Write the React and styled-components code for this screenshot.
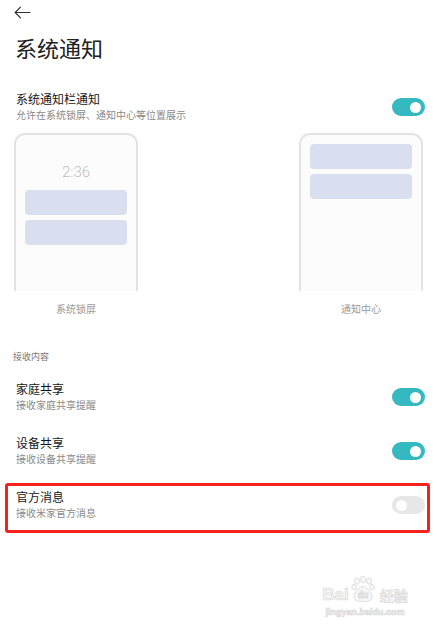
import React from 'react';
import styled, { createGlobalStyle } from 'styled-components';

const GlobalStyle = createGlobalStyle`
  html, body {
    margin: 0;
    padding: 0;
    background: #fff;
  }
  body {
    font-family: "Noto Sans CJK SC", "Noto Sans", sans-serif;
    color: #1a1a1a;
  }
`;

const Page = styled.div`
  position: relative;
  width: 437px;
  height: 632px;
  overflow: hidden;
  background: #fff;
`;

const TopBar = styled.div`
  height: 25px;
  display: flex;
  align-items: center;
  padding-left: 14px;
`;

const BackButton = styled.button`
  border: none;
  background: none;
  padding: 0;
  display: flex;
  align-items: center;
`;

const Title = styled.h1`
  margin: 7px 0 0 15px;
  font-size: 22px;
  line-height: 30px;
  font-weight: 400;
  color: #222;
`;

const Row = styled.div`
  position: relative;
  display: flex;
  align-items: center;
  justify-content: space-between;
  height: 54px;
  box-sizing: border-box;
  padding: 0 12px 0 16px;

  ${({ $marked }) => $marked && `
    &::after {
      content: '';
      position: absolute;
      top: 5px;
      bottom: -1px;
      left: 5px;
      right: 7px;
      border: 3px solid #f5211a;
      border-radius: 3px;
      pointer-events: none;
    }
  `}
`;

const RowText = styled.div`
  display: flex;
  flex-direction: column;
  margin-top: -1px;
`;

const RowTitle = styled.div`
  font-size: 12px;
  line-height: 16px;
  color: #161616;
`;

const RowSub = styled.div`
  font-size: 10px;
  line-height: 15px;
  color: #8a8a8a;
`;

const Track = styled.div`
  width: 33px;
  height: 18px;
  border-radius: 9px;
  background: ${({ $on }) => ($on ? '#34b9c0' : '#e7e7e7')};
  display: flex;
  align-items: center;
  justify-content: ${({ $on }) => ($on ? 'flex-end' : 'flex-start')};
  padding: 0 4px;
  box-sizing: border-box;
`;

const Knob = styled.div`
  width: 11px;
  height: 11px;
  border-radius: 50%;
  background: #fff;
`;

const Previews = styled.div`
  display: flex;
  justify-content: space-between;
  padding: 0 14px;
  margin-top: -1px;
`;

const PreviewCol = styled.div`
  display: flex;
  flex-direction: column;
  align-items: center;
`;

const Phone = styled.div`
  width: 124px;
  height: 158px;
  box-sizing: border-box;
  border: 2px solid #e3e3e3;
  border-bottom: none;
  border-radius: 11px 11px 0 0;
  background: #fcfcfc;
  padding: 9px 9px 0;
  display: flex;
  flex-direction: column;
  gap: 5px;
`;

const Clock = styled.div`
  font-family: Roboto, "Noto Sans", sans-serif;
  font-weight: 300;
  font-size: 15px;
  line-height: 20px;
  color: #bdbdbd;
  text-align: center;
  margin: 18px 0 3px;
`;

const Card = styled.div`
  height: 25px;
  border-radius: 4px;
  background: #dadff0;
`;

const PreviewLabel = styled.div`
  margin-top: 11px;
  font-size: 10px;
  line-height: 14px;
  color: #9a9a9a;
`;

const SectionLabel = styled.div`
  margin: 35px 0 7px 13px;
  font-size: 9px;
  line-height: 12px;
  color: #777;
`;

const Watermark = styled.div`
  position: absolute;
  left: 318px;
  top: 576px;
  width: 94px;
  display: flex;
  flex-direction: column;
  align-items: center;
  color: #f6f6f6;
  -webkit-text-stroke: 0.7px #d9d9d9;
  font-family: "Liberation Sans", Arial, sans-serif;
  pointer-events: none;
`;

const MarkLine = styled.div`
  display: flex;
  align-items: flex-end;
  gap: 2px;
`;

const MarkBig = styled.span`
  font-size: 17px;
  font-weight: 700;
  line-height: 16px;
`;

const MarkCn = styled.span`
  font-family: "Noto Sans CJK SC", sans-serif;
  font-size: 14px;
  font-weight: 700;
  line-height: 16px;
  margin-left: 3px;
`;

const MarkUrl = styled.div`
  margin-top: 4px;
  font-size: 9px;
  font-weight: 700;
  line-height: 10px;
`;

const Switch = ({ on }) => (
  <Track $on={on}>
    <Knob />
  </Track>
);

const SettingRow = ({ title, sub, on, marked }) => (
  <Row $marked={marked}>
    <RowText>
      <RowTitle>{title}</RowTitle>
      <RowSub>{sub}</RowSub>
    </RowText>
    <Switch on={on} />
  </Row>
);

const Paw = () => (
  <svg width="24" height="27" viewBox="0 0 24 27" fill="#f6f6f6" stroke="#d9d9d9" strokeWidth="0.8">
    <ellipse cx="6" cy="5" rx="2.6" ry="3.2" />
    <ellipse cx="12" cy="3.6" rx="2.6" ry="3.2" />
    <ellipse cx="18" cy="5" rx="2.6" ry="3.2" />
    <ellipse cx="3" cy="11" rx="2.2" ry="2.8" />
    <ellipse cx="21" cy="11" rx="2.2" ry="2.8" />
    <path d="M12 10.5c-4 0-9 6-9 10.5 0 3 2.5 4.5 9 4.5s9-1.5 9-4.5c0-4.5-5-10.5-9-10.5z" />
    <text x="12" y="22" textAnchor="middle" fontSize="8.5" fontWeight="700" fontFamily="Liberation Sans, sans-serif">du</text>
  </svg>
);

export default function App() {
  return (
    <Page>
      <GlobalStyle />
      <TopBar>
        <BackButton aria-label="back">
          <svg width="17" height="13" viewBox="0 0 17 13" fill="none" stroke="#333" strokeWidth="1.2" strokeLinecap="round" strokeLinejoin="round">
            <path d="M16 6.5H1.5M6.5 1.2L1.2 6.5l5.3 5.3" />
          </svg>
        </BackButton>
      </TopBar>
      <Title>系统通知</Title>

      <div style={{ marginTop: 18 }}>
        <SettingRow title="系统通知栏通知" sub="允许在系统锁屏、通知中心等位置展示" on />
      </div>

      <Previews>
        <PreviewCol>
          <Phone>
            <Clock>2:36</Clock>
            <Card />
            <Card />
          </Phone>
          <PreviewLabel>系统锁屏</PreviewLabel>
        </PreviewCol>
        <PreviewCol>
          <Phone>
            <Card />
            <Card />
          </Phone>
          <PreviewLabel>通知中心</PreviewLabel>
        </PreviewCol>
      </Previews>

      <SectionLabel>接收内容</SectionLabel>
      <SettingRow title="家庭共享" sub="接收家庭共享提醒" on />
      <SettingRow title="设备共享" sub="接收设备共享提醒" on />
      <SettingRow title="官方消息" sub="接收米家官方消息" marked />

      <Watermark>
        <MarkLine>
          <MarkBig>Bai</MarkBig>
          <Paw />
          <MarkCn>经验</MarkCn>
        </MarkLine>
        <MarkUrl>jingyan.baidu.com</MarkUrl>
      </Watermark>
    </Page>
  );
}
